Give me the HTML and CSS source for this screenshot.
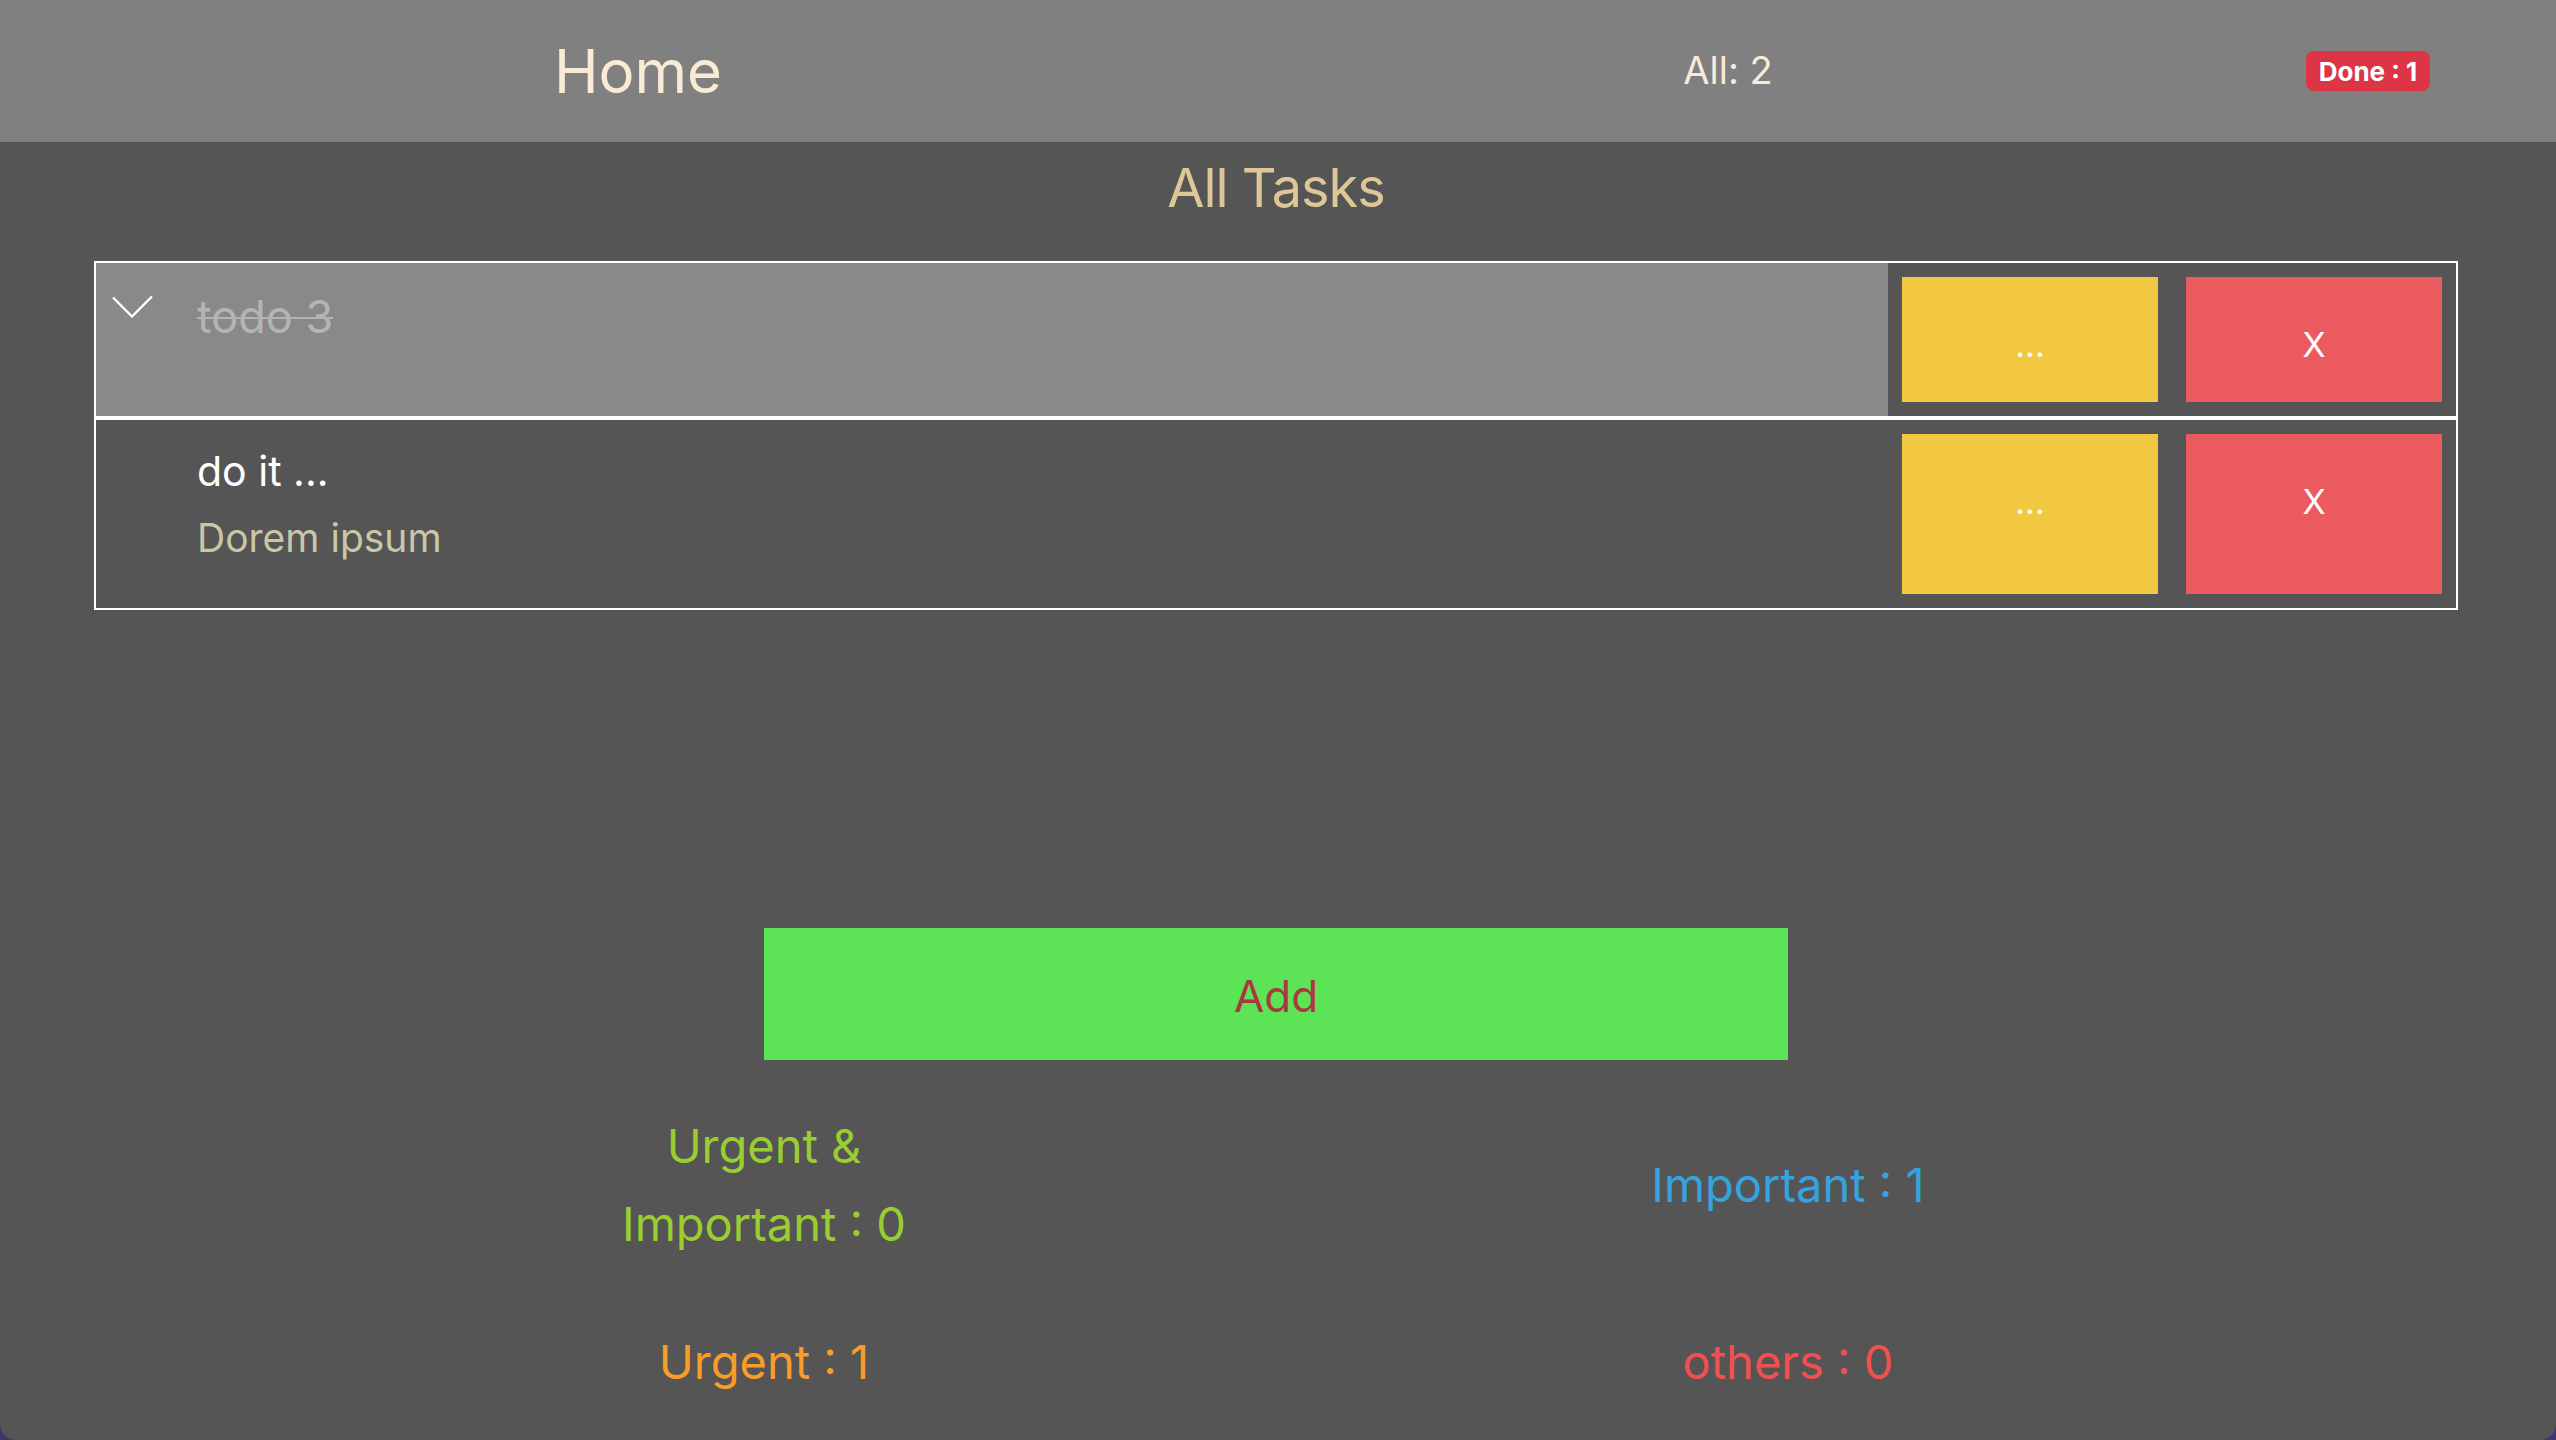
FILE: index.html
```html
<!DOCTYPE html>
<html lang="en">
<head>
<meta charset="utf-8">
<title>Home</title>
<link rel="stylesheet" href="styles.css">
</head>
<body>
<div class="app">
  <header class="topbar">
    <div class="brand">Home</div>
    <div class="count">All: 2</div>
    <div class="badge-cell"><span class="badge">Done : 1</span></div>
  </header>
  <main class="content">
    <h2 class="page-title">All Tasks</h2>
    <ul class="tasks">
      <li class="task done">
        <div class="task-main">
          <div class="task-check">
            <svg width="41" height="22" viewBox="0 0 41 22"><path d="M1 1.5 L20 20.5 L40 0.5" fill="none" stroke="#ffffff" stroke-width="2.4"/></svg>
          </div>
          <div class="task-text">
            <div class="task-title">todo 3</div>
          </div>
        </div>
        <div class="task-actions">
          <button class="btn btn-edit">...</button>
          <button class="btn btn-delete">X</button>
        </div>
      </li>
      <li class="task">
        <div class="task-main">
          <div class="task-check"></div>
          <div class="task-text">
            <div class="task-title">do it ...</div>
            <div class="task-desc">Dorem ipsum</div>
          </div>
        </div>
        <div class="task-actions">
          <button class="btn btn-edit">...</button>
          <button class="btn btn-delete">X</button>
        </div>
      </li>
    </ul>
    <div class="add-row"><button class="add-btn">Add</button></div>
    <section class="stats">
      <div class="stat-cell"><p class="stat stat-both">Urgent &amp; Important : 0</p></div>
      <div class="stat-cell"><p class="stat stat-important">Important : 1</p></div>
      <div class="stat-cell"><p class="stat stat-urgent">Urgent : 1</p></div>
      <div class="stat-cell"><p class="stat stat-others">others : 0</p></div>
    </section>
  </main>
</div>
</body>
</html>
```
FILE: styles.css
```css
* { box-sizing: border-box; }

html, body {
  margin: 0;
  padding: 0;
}

body {
  background: #3b3870;
  font-family: Inter, "Noto Sans", sans-serif;
  width: 2556px;
  height: 1440px;
  overflow: hidden;
}

.app {
  height: 1440px;
  background: #555555;
  border-radius: 0 0 16px 16px;
  overflow: hidden;
  display: flex;
  flex-direction: column;
}

.topbar {
  height: 142px;
  flex: none;
  background: #808080;
  display: grid;
  grid-template-columns: 1276px 904px 1fr;
  align-items: center;
  text-align: center;
  color: #faebd7;
}

.brand {
  font-size: 60px;
  line-height: 1;
}

.count {
  font-size: 38px;
  line-height: 1;
  padding-bottom: 2px;
}

.badge-cell {
  display: flex;
  justify-content: center;
}

.badge {
  display: inline-flex;
  align-items: center;
  justify-content: center;
  width: 124px;
  height: 40px;
  border-radius: 8px;
  background: #dc3545;
  color: #ffffff;
  font-weight: 700;
  font-size: 26px;
}

.content {
  flex: 1;
  padding-right: 4px;
  display: flex;
  flex-direction: column;
}

.page-title {
  margin: 12px 0 40px;
  font-size: 54px;
  font-weight: 400;
  line-height: 67px;
  letter-spacing: -1px;
  text-align: center;
  color: #dec797;
}

.tasks {
  list-style: none;
  margin: 0 94px;
  padding: 0;
}

.task {
  display: flex;
  border: 2px solid #ffffff;
}

.task-main {
  flex: 1;
  display: flex;
}

.task.done .task-main {
  background: #898989;
}

.task-check {
  width: 101px;
  flex: none;
  padding: 33px 0 0 16px;
}

.task-check svg {
  display: block;
}

.task-text {
  padding: 27px 0 0;
}

.task-title {
  font-size: 41px;
  line-height: 1.2;
  color: #ffffff;
}

.task.done .task-title {
  font-size: 45px;
  color: #b4b4b4;
  text-decoration: line-through;
  text-decoration-thickness: 2px;
}

.task-desc {
  margin-top: 19px;
  padding-bottom: 46px;
  font-size: 39px;
  line-height: 1.2;
  color: #c9c7a6;
}

.task-actions {
  flex: none;
  display: flex;
  gap: 28px;
  padding: 14px;
  background: #555555;
}

.btn {
  width: 256px;
  min-height: 125px;
  border: 0;
  margin: 0;
  padding: 47px 0 0;
  display: flex;
  align-items: flex-start;
  justify-content: center;
  font-family: Inter, "Noto Sans", sans-serif;
  font-size: 34px;
  line-height: 1.21;
  color: #ffffff;
}

.btn-edit {
  background: #f1c83f;
}

.btn-delete {
  background: #ea5a5f;
}

.add-row {
  display: flex;
  justify-content: center;
  margin-top: 318px;
}

.add-btn {
  width: 1024px;
  height: 132px;
  border: 0;
  padding: 4px 0 0;
  background: #5ce356;
  color: #aa3840;
  font-family: Inter, "Noto Sans", sans-serif;
  font-size: 44px;
}

.stats {
  margin: 47px 252px 0;
  display: grid;
  grid-template-columns: 1fr 1fr;
  row-gap: 60px;
  align-items: center;
}

.stat {
  margin: 0 auto;
  max-width: 360px;
  font-size: 47px;
  line-height: 78px;
  text-align: center;
}

.stat-both { color: #9acd32; }
.stat-important { color: #36a2df; }
.stat-urgent { color: #fa9c28; }
.stat-others { color: #f0504f; }
```
